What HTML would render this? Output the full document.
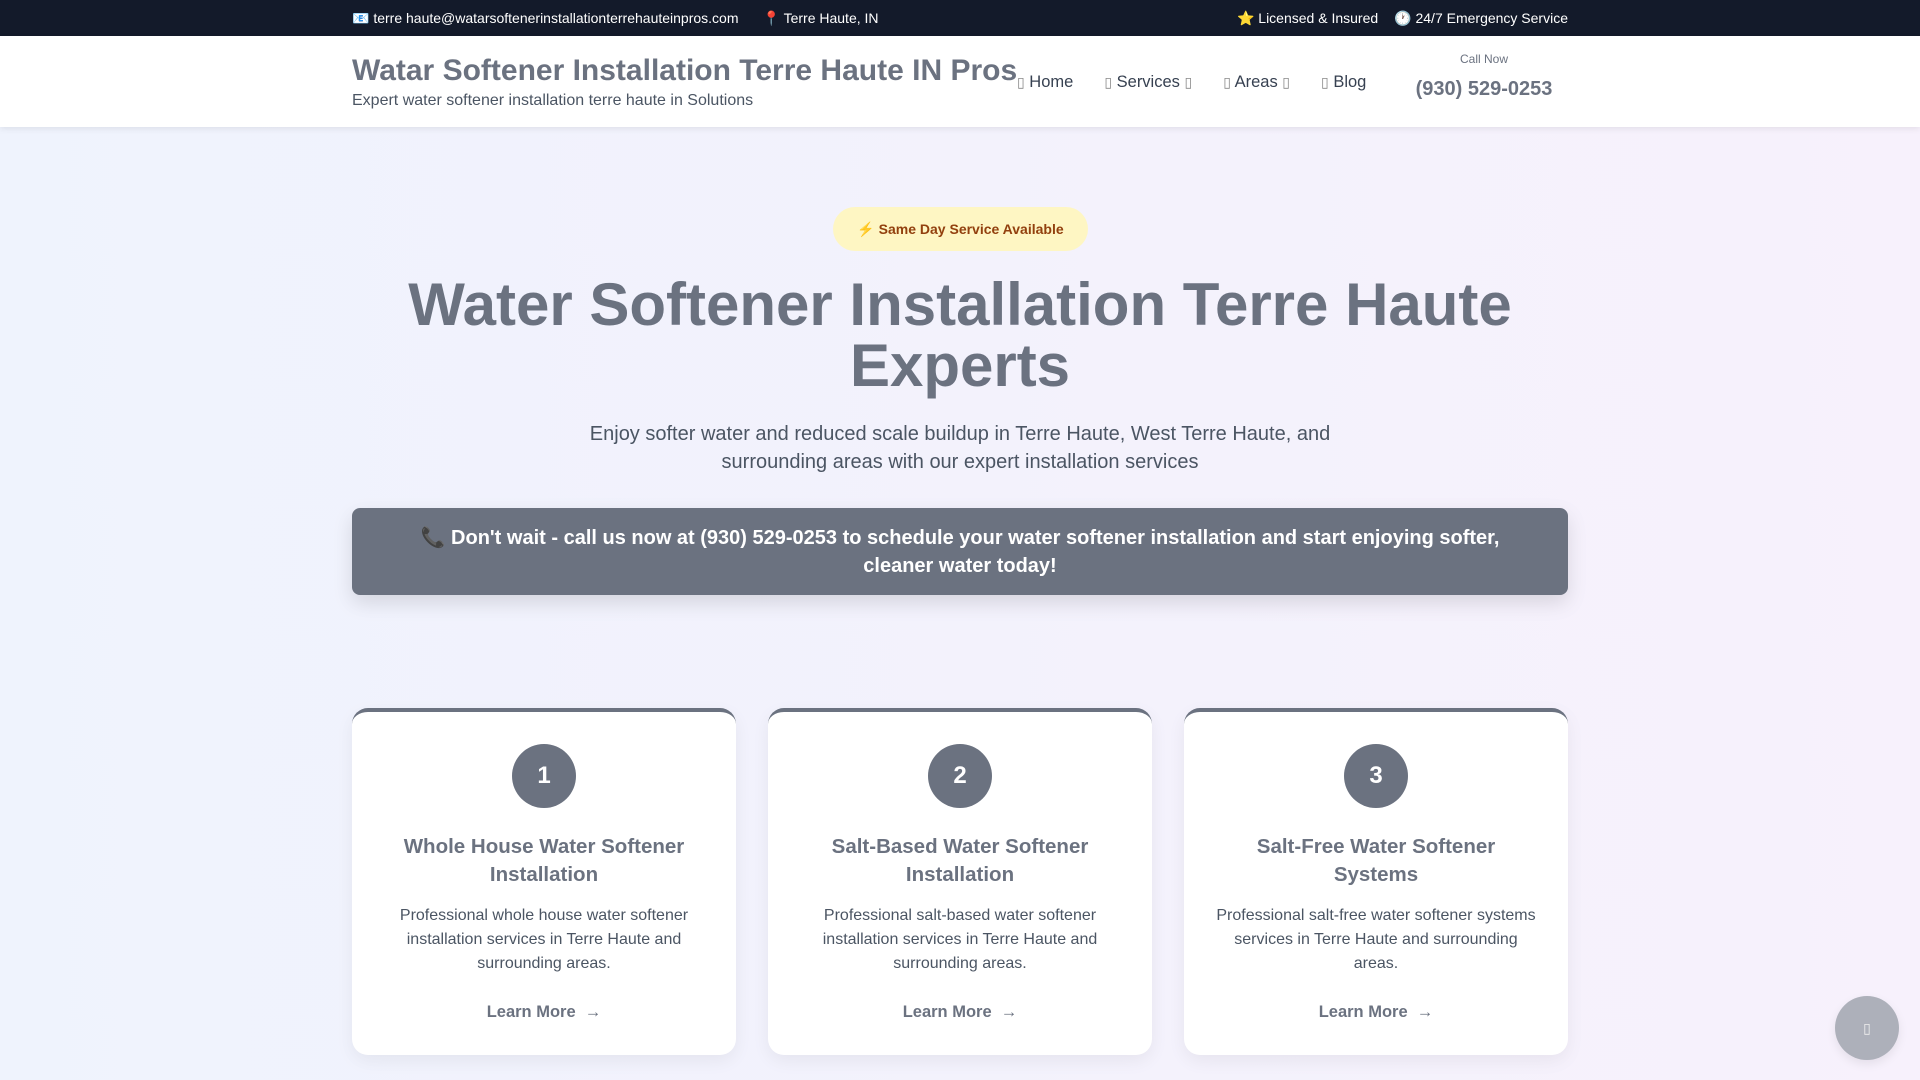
<!DOCTYPE html>
<html><head><meta charset="utf-8"><style>
*{box-sizing:border-box;margin:0;padding:0}
body{width:1920px;height:1080px;overflow:hidden;font-family:"Liberation Sans",sans-serif;background:linear-gradient(90deg,#eff3fd,#f7f1fc);position:relative}
.top{height:36px;background:#131a2a;color:#fff;font-size:14px;}
.wrap{width:1216px;margin:0 auto;position:relative}
.top .wrap{height:36px;display:flex;align-items:center;justify-content:space-between}
.top span{margin-right:24px}
.top .r span{margin-right:0;margin-left:16px}
header{height:91px;background:#fff;box-shadow:0 2px 6px rgba(0,0,0,.08)}
header .wrap{height:91px}
.title{position:absolute;left:0;top:18px;font-size:30px;font-weight:bold;color:#6b7280;white-space:nowrap}
.sub{position:absolute;left:0;top:56px;font-size:16px;color:#4b5563}
nav{position:absolute;left:1017px;top:73px;font-size:16.5px;color:#374151;display:flex}
nav > span{margin-right:31px;white-space:nowrap}
.b{font-size:14px;color:#888}
.call{position:absolute;width:140px;text-align:center}
.call .s{font-size:12px;color:#6b7280}
.call .p{font-size:20px;font-weight:bold;color:#6b7280;margin-top:12px}
.badge{position:absolute;left:833px;top:207px;width:255px;height:44px;border-radius:22px;background:#fef6c3;color:#92400e;font-size:14px;font-weight:bold;text-align:center;line-height:44px}
h1{position:absolute;left:352px;width:1216px;top:274px;text-align:center;font-size:60px;line-height:61px;color:#6b7280}
.lead{position:absolute;left:560px;width:800px;top:420px;text-align:center;font-size:20px;line-height:28px;color:#4b5563}
.cta{position:absolute;left:352px;width:1216px;top:508px;height:87px;border-radius:8px;background:#6b7280;color:#fff;font-weight:bold;font-size:20px;line-height:28px;text-align:center;padding:16px 60px 0;box-shadow:0 8px 20px rgba(0,0,0,.12)}
.card{position:absolute;top:708px;width:384px;height:347px;background:#fff;border-radius:16px;border-top:4px solid #6b7280;box-shadow:0 6px 18px rgba(0,0,0,.06);text-align:center}
.num{width:64px;height:64px;border-radius:50%;background:#6b7280;color:#fff;font-weight:bold;font-size:24px;line-height:64px;margin:32px auto 0}
.card h3{font-size:20.5px;line-height:28px;color:#6b7280;margin:25px 36px 0}
.card p{font-size:16px;line-height:24px;color:#4b5563;margin:15px 30px 0}
.lm{position:absolute;left:0;right:0;top:291px;font-size:16.5px;font-weight:bold;color:#6b7280}
.fab{position:absolute;left:1835px;top:996px;width:64px;height:64px;border-radius:50%;background:#adb0ba;color:#eee;text-align:center;line-height:64px;font-size:14px;box-shadow:0 4px 10px rgba(0,0,0,.08)}
</style></head><body>
<div class="top"><div class="wrap"><div><span>📧 terre haute@watarsoftenerinstallationterrehauteinpros.com</span><span>📍 Terre Haute, IN</span></div><div class="r"><span>⭐ Licensed &amp; Insured</span><span>🕐 24/7 Emergency Service</span></div></div></div>
<header><div class="wrap">
<div class="title">Watar Softener Installation Terre Haute IN Pros</div>
<div class="sub">Expert water softener installation terre haute in Solutions</div>
</div></header>
<nav><span><span class="b">▯</span> Home</span><span><span class="b">▯</span> Services <span class="b">▯</span></span><span><span class="b">▯</span> Areas <span class="b">▯</span></span><span><span class="b">▯</span> Blog</span></nav>
<div class="call" style="left:1414px;top:52px"><div class="s">Call Now</div><div class="p">(930) 529-0253</div></div>
<div class="badge">⚡ Same Day Service Available</div>
<h1>Water Softener Installation Terre Haute Experts</h1>
<div class="lead">Enjoy softer water and reduced scale buildup in Terre Haute, West Terre Haute, and surrounding areas with our expert installation services</div>
<div class="cta">📞 Don't wait - call us now at (930) 529-0253 to schedule your water softener installation and start enjoying softer, cleaner water today!</div>
<div class="card" style="left:352px"><div class="num">1</div><h3>Whole House Water Softener Installation</h3><p>Professional whole house water softener installation services in Terre Haute and surrounding areas.</p><div class="lm">Learn More &nbsp;→</div></div>
<div class="card" style="left:768px"><div class="num">2</div><h3>Salt-Based Water Softener Installation</h3><p>Professional salt-based water softener installation services in Terre Haute and surrounding areas.</p><div class="lm">Learn More &nbsp;→</div></div>
<div class="card" style="left:1184px"><div class="num">3</div><h3>Salt-Free Water Softener Systems</h3><p>Professional salt-free water softener systems services in Terre Haute and surrounding areas.</p><div class="lm">Learn More &nbsp;→</div></div>
<div class="fab">▯</div>
</body></html>
